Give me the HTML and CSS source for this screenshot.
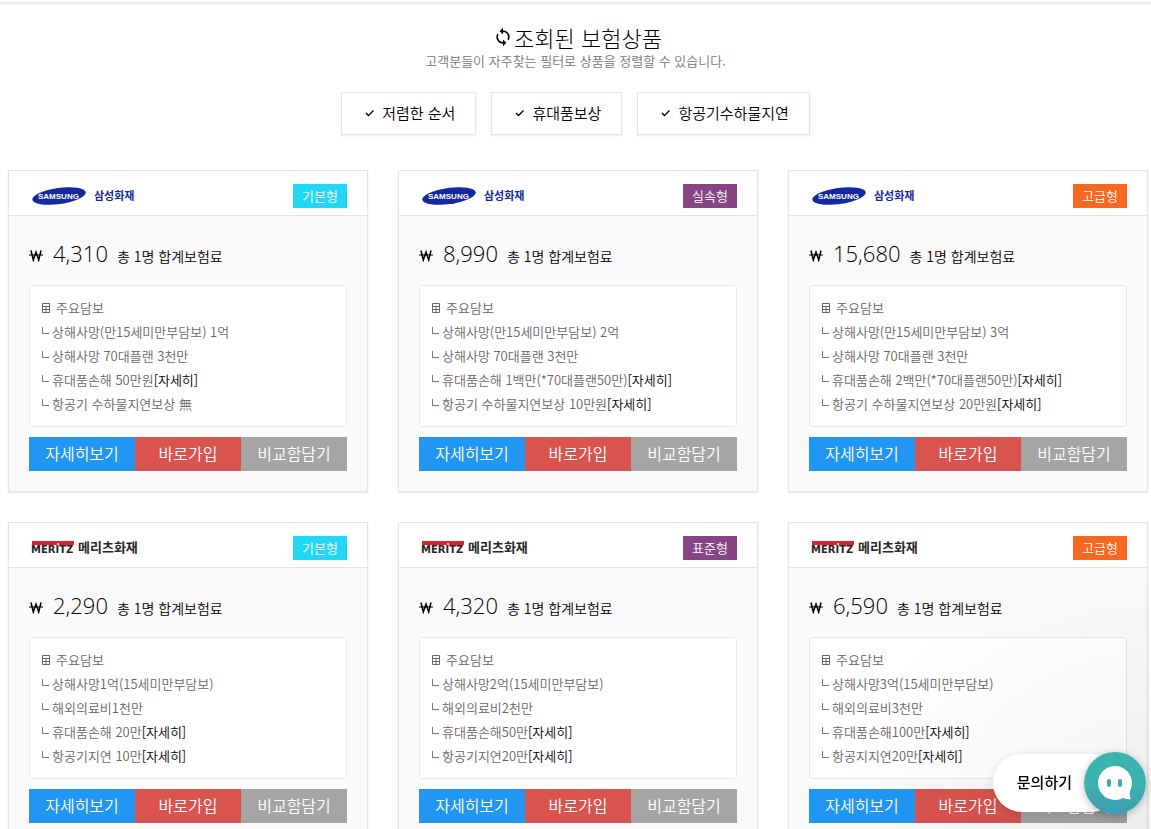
FILE: index.html
```html
<!DOCTYPE html>
<html lang="ko">
<head>
<meta charset="utf-8">
<meta name="viewport" content="width=device-width, initial-scale=1">
<title>조회된 보험상품</title>
<link rel="stylesheet" href="styles.css">
</head>
<body>
<svg class="sprite" aria-hidden="true">
  <symbol id="sync" viewBox="0 0 24 24"><path d="M12 18a6 6 0 0 1-6-6c0-1 .25-1.970.7-2.800L5.240 7.740A7.930 7.930 0 0 0 4 12a8 8 0 0 0 8 8v3l4-4-4-4m0-11V1L8 5l4 4V6a6 6 0 0 1 6 6c0 1-.25 1.970-.7 2.800l1.460 1.460A7.930 7.930 0 0 0 20 12a8 8 0 0 0-8-8z"/></symbol>
  <symbol id="check" viewBox="0 0 16 16"><path d="M4 8l2.500 2.500 5-5" fill="none" stroke="currentColor" stroke-width="1.300"/></symbol>
  <symbol id="won" viewBox="0 0 14 14"><path d="M2 2.500L4.300 12 7 4l2.700 8L12 2.500" fill="none" stroke="currentColor" stroke-width="1.500"/><path d="M0 7h14" fill="none" stroke="currentColor"/></symbol>
  <symbol id="table" viewBox="0 0 10 10"><path d="M1.500 .5h7v9h-7zM1.500 3.500h7M1.500 6.500h7M5 3.500v6" fill="none" stroke="currentColor"/></symbol>
  <symbol id="samsung" viewBox="0 0 108 24">
    <ellipse cx="28" cy="12" rx="27" ry="8" fill="#1428a0" transform="rotate(-8 28 12)"/>
    <text class="samsung-word" x="7" y="15">SAMSUNG</text>
    <text class="samsung-name" x="63" y="16">삼성화재</text>
  </symbol>
  <symbol id="meritz" viewBox="0 0 108 24">
    <path d="M1 5h42v4H1z" fill="#e0222b"/><circle cx="27" cy="8" r="1" fill="#fff"/>
    <text class="meritz-word" x="0" y="17">MERITZ</text>
    <text class="meritz-name" x="47" y="16">메리츠화재</text>
  </symbol>
</svg>
<header class="topbar"></header>
<main>
  <section class="intro">
    <h1><svg class="icon-sync"><use href="#sync"/></svg>조회된 보험상품</h1>
    <p>고객분들이 자주찾는 필터로 상품을 정렬할 수 있습니다.</p>
    <div class="filters">
      <button type="button"><svg><use href="#check"/></svg>저렴한 순서</button>
      <button type="button"><svg><use href="#check"/></svg>휴대품보상</button>
      <button type="button"><svg><use href="#check"/></svg>항공기수하물지연</button>
    </div>
  </section>
  <section class="cards">
    <article class="card">
      <header><svg class="logo" role="img" aria-label="삼성화재"><use href="#samsung"/></svg><span class="badge basic">기본형</span></header>
      <div class="body">
        <p class="price"><svg><use href="#won"/></svg><strong>4,310</strong><span>총 1명 합계보험료</span></p>
        <div class="cover"><h2><svg><use href="#table"/></svg>주요담보</h2>
          <ul><li>상해사망(만15세미만부담보) 1억</li><li>상해사망 70대플랜 3천만</li><li>휴대품손해 50만원<a href="#detail">[자세히]</a></li><li>항공기 수하물지연보상 無</li></ul></div>
        <div class="actions"><button type="button" class="view">자세히보기</button><button type="button" class="join">바로가입</button><button type="button" class="compare">비교함담기</button></div>
      </div>
    </article>
    <article class="card">
      <header><svg class="logo" role="img" aria-label="삼성화재"><use href="#samsung"/></svg><span class="badge standard">실속형</span></header>
      <div class="body">
        <p class="price"><svg><use href="#won"/></svg><strong>8,990</strong><span>총 1명 합계보험료</span></p>
        <div class="cover"><h2><svg><use href="#table"/></svg>주요담보</h2>
          <ul><li>상해사망(만15세미만부담보) 2억</li><li>상해사망 70대플랜 3천만</li><li>휴대품손해 1백만(*70대플랜50만)<a href="#detail">[자세히]</a></li><li>항공기 수하물지연보상 10만원<a href="#detail">[자세히]</a></li></ul></div>
        <div class="actions"><button type="button" class="view">자세히보기</button><button type="button" class="join">바로가입</button><button type="button" class="compare">비교함담기</button></div>
      </div>
    </article>
    <article class="card">
      <header><svg class="logo" role="img" aria-label="삼성화재"><use href="#samsung"/></svg><span class="badge premium">고급형</span></header>
      <div class="body">
        <p class="price"><svg><use href="#won"/></svg><strong>15,680</strong><span>총 1명 합계보험료</span></p>
        <div class="cover"><h2><svg><use href="#table"/></svg>주요담보</h2>
          <ul><li>상해사망(만15세미만부담보) 3억</li><li>상해사망 70대플랜 3천만</li><li>휴대품손해 2백만(*70대플랜50만)<a href="#detail">[자세히]</a></li><li>항공기 수하물지연보상 20만원<a href="#detail">[자세히]</a></li></ul></div>
        <div class="actions"><button type="button" class="view">자세히보기</button><button type="button" class="join">바로가입</button><button type="button" class="compare">비교함담기</button></div>
      </div>
    </article>
    <article class="card">
      <header><svg class="logo" role="img" aria-label="메리츠화재"><use href="#meritz"/></svg><span class="badge basic">기본형</span></header>
      <div class="body">
        <p class="price"><svg><use href="#won"/></svg><strong>2,290</strong><span>총 1명 합계보험료</span></p>
        <div class="cover"><h2><svg><use href="#table"/></svg>주요담보</h2>
          <ul><li>상해사망1억(15세미만부담보)</li><li>해외의료비1천만</li><li>휴대품손해 20만<a href="#detail">[자세히]</a></li><li>항공기지연 10만<a href="#detail">[자세히]</a></li></ul></div>
        <div class="actions"><button type="button" class="view">자세히보기</button><button type="button" class="join">바로가입</button><button type="button" class="compare">비교함담기</button></div>
      </div>
    </article>
    <article class="card">
      <header><svg class="logo" role="img" aria-label="메리츠화재"><use href="#meritz"/></svg><span class="badge standard">표준형</span></header>
      <div class="body">
        <p class="price"><svg><use href="#won"/></svg><strong>4,320</strong><span>총 1명 합계보험료</span></p>
        <div class="cover"><h2><svg><use href="#table"/></svg>주요담보</h2>
          <ul><li>상해사망2억(15세미만부담보)</li><li>해외의료비2천만</li><li>휴대품손해50만<a href="#detail">[자세히]</a></li><li>항공기지연20만<a href="#detail">[자세히]</a></li></ul></div>
        <div class="actions"><button type="button" class="view">자세히보기</button><button type="button" class="join">바로가입</button><button type="button" class="compare">비교함담기</button></div>
      </div>
    </article>
    <article class="card">
      <header><svg class="logo" role="img" aria-label="메리츠화재"><use href="#meritz"/></svg><span class="badge premium">고급형</span></header>
      <div class="body">
        <p class="price"><svg><use href="#won"/></svg><strong>6,590</strong><span>총 1명 합계보험료</span></p>
        <div class="cover"><h2><svg><use href="#table"/></svg>주요담보</h2>
          <ul><li>상해사망3억(15세미만부담보)</li><li>해외의료비3천만</li><li>휴대품손해100만<a href="#detail">[자세히]</a></li><li>항공지지연20만<a href="#detail">[자세히]</a></li></ul></div>
        <div class="actions"><button type="button" class="view">자세히보기</button><button type="button" class="join">바로가입</button><button type="button" class="compare">비교함담기</button></div>
      </div>
    </article>
  </section>
</main>
<div class="chat-glow"></div>
<button type="button" class="chat">
  <span class="chat-label">문의하기</span>
  <span class="chat-face"><svg viewBox="0 0 36 36"><path d="M18 1a17 17 0 1 0 8 32c2 1 5 1.500 8 1-1-2-1.500-5-1-8A17 17 0 0 0 18 1z" fill="#fff"/><rect x="10" y="14" width="4" height="8" rx="2" fill="#3cabb0"/><rect x="21" y="14" width="4" height="8" rx="2" fill="#3cabb0"/></svg></span>
</button>
</body>
</html>
```
FILE: styles.css
```css
* { box-sizing: border-box; }
body {
  margin: 0;
  background: #fff;
  color: #000;
  font: 350 13px/24px "Noto Sans CJK KR", "Noto Sans", sans-serif;
}
h1, h2, p, ul { margin: 0; padding: 0; font-weight: inherit; }
button { font: inherit; color: inherit; border: 0; padding: 0; cursor: pointer; }
.sprite { display: none; }
.topbar {
  height: 8px;
  background: linear-gradient(#fff 2px, #e9e9e9 2px, #f4f4f4 4px, #fff 7px);
}
.intro { padding-top: 17px; text-align: center; }
.intro h1 {
  display: flex;
  align-items: center;
  justify-content: center;
  gap: 1px;
  padding-left: 4px;
  font-size: 22px;
  font-weight: 300;
  line-height: 24px;
}
.icon-sync { width: 20px; height: 20px; fill: currentColor; }
.intro p { line-height: 24px; color: #757575; }
.filters { display: flex; justify-content: center; gap: 15px; margin-top: 19px; }
.filters button {
  display: flex;
  align-items: center;
  gap: 4px;
  height: 43px;
  padding: 0 20px 2px;
  background: #fff;
  border: 1px solid #e4e4e4;
  box-shadow: 0 1px 2px rgba(0, 0, 0, .08);
  font-size: 15px;
}
.filters svg { width: 16px; height: 16px; }
.cards {
  display: grid;
  grid-template-columns: repeat(3, 1fr);
  gap: 30px;
  padding: 35px 3px 30px 8px;
}
.card {
  background: #fafafa;
  border: 1px solid #e3e3e3;
  box-shadow: 0 1px 2px rgba(0, 0, 0, .1);
}
.card header {
  display: flex;
  align-items: center;
  justify-content: space-between;
  height: 45px;
  padding: 5px 20px 0 22px;
  background: #fff;
  border-bottom: 1px solid #e3e3e3;
}
.logo { width: 108px; height: 24px; }
.samsung-word { font: bold 8px "Liberation Sans", sans-serif; fill: #fff; }
.samsung-name { font: bold 11px "Noto Sans CJK KR", sans-serif; fill: #1428a0; }
.meritz-word { font: bold 10px "DejaVu Sans", sans-serif; fill: #282828; }
.meritz-name { font: bold 13px "Noto Sans CJK KR", sans-serif; fill: #282828; }
.badge { padding: 0 9px; color: #fff; }
.basic { background: #22d7f3; }
.standard { background: #874585; }
.premium { background: #f76720; }
.body { padding: 20px; }
.price { display: flex; align-items: baseline; height: 49px; line-height: 34px; }
.price svg { width: 14px; height: 14px; }
.price strong { margin: 0 9px 0 10px; font: 300 22px/34px "Open Sans", sans-serif; }
.price span { font-size: 14px; }
.cover {
  padding: 10px 11px;
  background: #fff;
  border: 1px solid #e9e9e9;
  border-radius: 3px;
  color: #666;
}
.cover h2 { display: flex; align-items: center; gap: 5px; font-size: 13px; }
.cover svg { width: 10px; height: 10px; }
.cover li { display: flex; align-items: center; white-space: nowrap; }
.cover li::before {
  content: "";
  width: 6px;
  height: 6px;
  margin: 0 3px 4px 1px;
  border: solid #777;
  border-width: 0 0 1px 1px;
}
.cover a { color: #000; text-decoration: none; }
.actions { display: grid; grid-template-columns: repeat(3, 1fr); margin-top: 10px; }
.actions button { height: 34px; padding-bottom: 2px; color: #fff; font-size: 16px; }
.actions .view { background: #2196f3; }
.actions .join { background: #d9534f; }
.actions .compare { background: #a5a5a5; }
.chat-glow {
  position: fixed;
  right: 0;
  bottom: 0;
  width: 320px;
  height: 280px;
  background: radial-gradient(ellipse at bottom right, rgba(0, 0, 0, .05), transparent 70%);
  pointer-events: none;
}
.chat {
  position: fixed;
  right: 5px;
  bottom: 15px;
  display: flex;
  align-items: center;
  background: none;
}
.chat-label {
  height: 58px;
  margin-right: -36px;
  padding: 0 48px 0 24px;
  border-radius: 29px;
  background: #fff;
  box-shadow: 0 2px 10px rgba(0, 0, 0, .12);
  font-size: 15px;
  font-weight: 500;
  line-height: 56px;
}
.chat-face {
  display: grid;
  place-items: center;
  width: 62px;
  height: 62px;
  border-radius: 50%;
  background: linear-gradient(#3db3ae 50%, #3d9cb5);
  box-shadow: 0 2px 8px rgba(0, 0, 0, .25);
}
.chat-face svg { width: 36px; height: 36px; }
```
